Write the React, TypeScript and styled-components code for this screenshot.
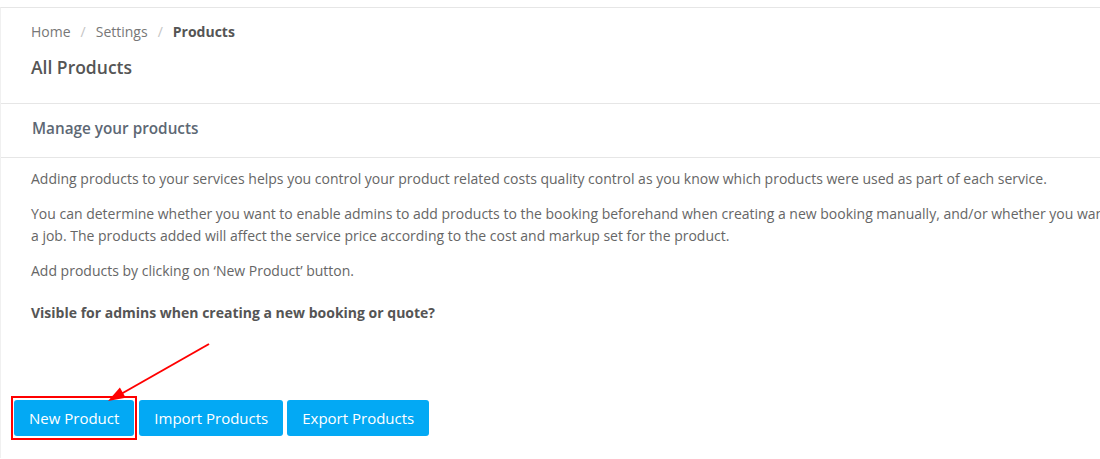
import React, { FC } from "react";
import styled, { createGlobalStyle } from "styled-components";

const GlobalStyle = createGlobalStyle`
  html, body {
    margin: 0;
    padding: 0;
    background: #fff;
    overflow: hidden;
  }
  body {
    font-family: "Open Sans", "Liberation Sans", sans-serif;
    color: #666;
  }
`;

const Page = styled.div`
  position: relative;
  margin-top: 7px;
  width: 1700px;
  border-top: 1px solid #e6e6e6;
  border-left: 1px solid #f0f0f0;
  min-height: 451px;
  box-sizing: border-box;
`;

const Header = styled.div`
  padding: 14px 30px 23px;
  border-bottom: 1px solid #e6e6e6;
`;

const Crumbs = styled.div`
  display: flex;
  align-items: center;
  font-size: 14px;
  line-height: 20px;
  color: #777;
`;

const Crumb = styled.span<{ active?: boolean }>`
  color: ${(p) => (p.active ? "#555" : "#777")};
  font-weight: ${(p) => (p.active ? 700 : 400)};
`;

const Sep = styled.span`
  color: #c4c4c4;
  margin: 0 10px;
`;

const Title = styled.h1`
  margin: 12px 0 0;
  font-size: 17.5px;
  line-height: 26px;
  font-weight: 600;
  color: #555;
`;

const SectionHead = styled.div`
  padding: 14px 31px 19px;
  font-size: 15.3px;
  line-height: 20px;
  font-weight: 600;
  color: #5d6874;
  border-bottom: 1px solid #e6e6e6;
`;

const Body = styled.div`
  padding: 10px 30px 0;
`;

const Para = styled.p<{ strong?: boolean }>`
  margin: 0 0 13px;
  font-size: 14px;
  line-height: 22px;
  color: ${(p) => (p.strong ? "#555" : "#666")};
  font-weight: ${(p) => (p.strong ? 700 : 400)};
  margin-top: ${(p) => (p.strong ? "20px" : "0")};
`;

const Actions = styled.div`
  display: flex;
  align-items: center;
  padding: 59px 0 0 10px;
`;

const Highlight = styled.div`
  border: 2px solid #f00;
  padding: 2px 1px;
  display: flex;
`;

const Button = styled.button<{ spaced?: number }>`
  height: 36px;
  padding: 0 15px;
  margin-left: ${(p) => p.spaced ?? 0}px;
  border: none;
  border-radius: 3px;
  background: #03a9f4;
  color: #fff;
  font-family: "Open Sans", "Liberation Sans", sans-serif;
  font-size: 15px;
  cursor: pointer;
`;

const Arrow = styled.svg`
  position: absolute;
  left: 100px;
  top: 318px;
  overflow: visible;
`;

const App: FC = () => {
  return (
    <>
      <GlobalStyle />
      <Page>
        <Header>
          <Crumbs>
            <Crumb>Home</Crumb>
            <Sep>/</Sep>
            <Crumb>Settings</Crumb>
            <Sep>/</Sep>
            <Crumb active>Products</Crumb>
          </Crumbs>
          <Title>All Products</Title>
        </Header>
        <SectionHead>Manage your products</SectionHead>
        <Body>
          <Para>
            Adding products to your services helps you control your product related costs quality control as you know
            which products were used as part of each service.
          </Para>
          <Para>
            You can determine whether you want to enable admins to add products to the booking beforehand when creating a
            new booking manually, and/or whether you want providers to add products when completing
            <br />a job. The products added will affect the service price according to the cost and markup set for the
            product.
          </Para>
          <Para>Add products by clicking on ‘New Product’ button.</Para>
          <Para strong>Visible for admins when creating a new booking or quote?</Para>
        </Body>
        <Actions>
          <Highlight>
            <Button>New Product</Button>
          </Highlight>
          <Button spaced={2}>Import Products</Button>
          <Button spaced={4}>Export Products</Button>
        </Actions>
        <Arrow width="120" height="80" viewBox="0 0 120 80">
          <line x1="108" y1="18" x2="20" y2="68" stroke="#f00" strokeWidth="2" />
          <polygon points="7,75 18.9,61.4 24.7,71.8" fill="#f00" />
        </Arrow>
      </Page>
    </>
  );
};

export default App;
